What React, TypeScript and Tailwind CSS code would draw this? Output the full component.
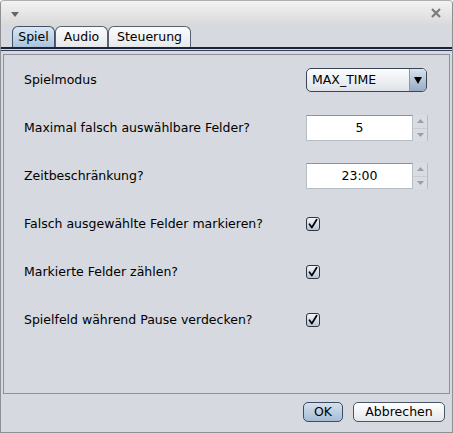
import React from "react";

function Checkbox() {
  return (
    <div className="w-[14px] h-[14px] rounded-[3px] border border-[#2b3646] bg-gradient-to-b from-[#f2f5f9] to-[#b9c6d5] flex items-center justify-center">
      <svg width="12" height="12" viewBox="0 0 12 12">
        <path d="M2.5 6.2 L4.8 9.6 L9.6 1.8" fill="none" stroke="#000" strokeWidth="1.8" strokeLinecap="round" strokeLinejoin="round" />
      </svg>
    </div>
  );
}

function Spinner({ value }: { value: string }) {
  return (
    <div className="flex h-[26px]">
      <div className="w-[107px] h-[26px] bg-white border border-[#b8bcc3] border-t-[#8e939b] flex items-center justify-center text-[12.5px] text-black">
        {value}
      </div>
      <div className="w-[15px] h-[26px] flex flex-col border-r border-[#b8bcc3]">
        <div className="flex-1 flex items-center justify-center border-b border-[#c9ccd2] bg-[#d9dce2]">
          <svg width="7" height="4" viewBox="0 0 7 4"><path d="M0 4 L3.5 0 L7 4Z" fill="#9aa0a8" /></svg>
        </div>
        <div className="flex-1 flex items-center justify-center bg-[#d9dce2]">
          <svg width="7" height="4" viewBox="0 0 7 4"><path d="M0 0 L3.5 4 L7 0Z" fill="#9aa0a8" /></svg>
        </div>
      </div>
    </div>
  );
}

export default function App() {
  const rows: { label: string; control: React.ReactNode }[] = [
    {
      label: "Spielmodus",
      control: (
        <div className="w-[121px] h-[24px] rounded-[5px] border border-[#3a4658] bg-gradient-to-b from-[#fbfcfd] to-[#dfe3e9] flex overflow-hidden">
          <div className="flex-1 flex items-center pl-[5px] text-[12.5px] text-black">MAX_TIME</div>
          <div className="w-[17px] h-full border-l border-[#8c98a8] bg-gradient-to-b from-[#d9e3ee] to-[#97abc2] flex items-center justify-center">
            <svg width="8" height="7" viewBox="0 0 8 7"><path d="M0 0 L8 0 L4 7Z" fill="#000" /></svg>
          </div>
        </div>
      ),
    },
    { label: "Maximal falsch auswählbare Felder?", control: <Spinner value="5" /> },
    { label: "Zeitbeschränkung?", control: <Spinner value="23:00" /> },
    { label: "Falsch ausgewählte Felder markieren?", control: <Checkbox /> },
    { label: "Markierte Felder zählen?", control: <Checkbox /> },
    { label: "Spielfeld während Pause verdecken?", control: <Checkbox /> },
  ];

  return (
    <div
      className="w-[453px] h-[433px] bg-[#d6d9df] border border-[#8f9094] border-t-[#b0b0b0] rounded-t-[4px] flex flex-col overflow-hidden text-black"
      style={{ fontFamily: "'DejaVu Sans', sans-serif" }}
    >
      {/* title bar */}
      <div className="h-[24px] shrink-0 bg-gradient-to-b from-[#f3f3f3] to-[#d9d9d9] flex items-center justify-between pl-[10px] pr-[11px]">
        <svg width="8" height="5" viewBox="0 0 8 5" className="mt-[2px]"><path d="M0 0 L8 0 L4 5Z" fill="#666" /></svg>
        <svg width="10" height="10" viewBox="0 0 10 10" className="-mt-[1px]">
          <path d="M1 1 L9 9 M9 1 L1 9" stroke="#7b7b7b" strokeWidth="2.2" />
        </svg>
      </div>

      {/* tabs */}
      <div className="h-[22px] shrink-0 flex items-end pl-[11px]">
        <div className="h-[21px] w-[43px] rounded-t-[6px] border border-b-0 border-[#435069] bg-gradient-to-b from-[#dbe7f3] to-[#a9c3dd] flex items-center justify-center pt-px text-[12.5px]">
          Spiel
        </div>
        <div className="h-[21px] w-[53px] rounded-t-[6px] border border-b-0 border-[#56606f] bg-gradient-to-b from-[#fbfbfc] to-[#e6e8ec] flex items-center justify-center pt-px text-[12.5px]">
          Audio
        </div>
        <div className="h-[21px] w-[83px] rounded-t-[6px] border border-b-0 border-[#56606f] bg-gradient-to-b from-[#fbfbfc] to-[#e6e8ec] flex items-center justify-center pt-px text-[12.5px]">
          Steuerung
        </div>
      </div>
      <div className="h-[2px] shrink-0 bg-[#1b2336]" />
      <div className="h-[1px] shrink-0 bg-[#d6d9df]" />
      <div className="h-[1px] shrink-0 bg-[#34405a]" />

      {/* panel */}
      <div className="mt-[3px] mx-[2px] h-[340px] shrink-0 border border-[#8e9197] pt-px pl-[20px]">
        {rows.map((r) => (
          <div key={r.label} className="h-[48px] flex items-center">
            <div className="w-[282px] text-[12.5px]">{r.label}</div>
            <div>{r.control}</div>
          </div>
        ))}
      </div>

      {/* buttons */}
      <div className="flex justify-end gap-[10px] pr-[7px] pt-[8px]">
        <div className="w-[40px] h-[20px] rounded-[5px] border border-[#3b4b62] bg-gradient-to-b from-[#d4e1ee] to-[#a6bcd4] flex items-center justify-center text-[12.5px]">
          OK
        </div>
        <div className="w-[92px] h-[20px] rounded-[5px] border border-[#4a5566] bg-gradient-to-b from-[#ffffff] to-[#e4e7eb] flex items-center justify-center text-[12.5px]">
          Abbrechen
        </div>
      </div>
    </div>
  );
}
